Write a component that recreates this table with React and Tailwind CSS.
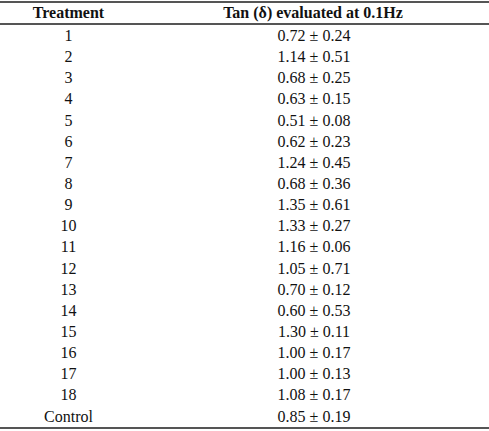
const rows = [
  ["1", "0.72 ± 0.24"],
  ["2", "1.14 ± 0.51"],
  ["3", "0.68 ± 0.25"],
  ["4", "0.63 ± 0.15"],
  ["5", "0.51 ± 0.08"],
  ["6", "0.62 ± 0.23"],
  ["7", "1.24 ± 0.45"],
  ["8", "0.68 ± 0.36"],
  ["9", "1.35 ± 0.61"],
  ["10", "1.33 ± 0.27"],
  ["11", "1.16 ± 0.06"],
  ["12", "1.05 ± 0.71"],
  ["13", "0.70 ± 0.12"],
  ["14", "0.60 ± 0.53"],
  ["15", "1.30 ± 0.11"],
  ["16", "1.00 ± 0.17"],
  ["17", "1.00 ± 0.13"],
  ["18", "1.08 ± 0.17"],
  ["Control", "0.85 ± 0.19"],
]

export default function App() {
  return (
    <div className="w-[489px] h-[431px] bg-white pt-px text-[16px] text-[#111] font-['Liberation_Serif','Times_New_Roman',serif]">
      <div className="border-t-2 border-b-2 border-[#555]">
        <div className="flex h-[20px] items-center font-bold leading-[20px]">
          <div className="w-[137px] text-center">Treatment</div>
          <div className="flex-1 text-center">Tan (δ) evaluated at 0.1Hz</div>
        </div>
      </div>

      <div className="border-b-2 border-[#555]">
        {rows.map(([treatment, value]) => (
          <div key={treatment} className="flex h-[21.15px] leading-[21.15px]">
            <div className="w-[137px] text-center">{treatment}</div>
            <div className="flex-1 text-center pl-[2px]">{value}</div>
          </div>
        ))}
      </div>
    </div>
  )
}
